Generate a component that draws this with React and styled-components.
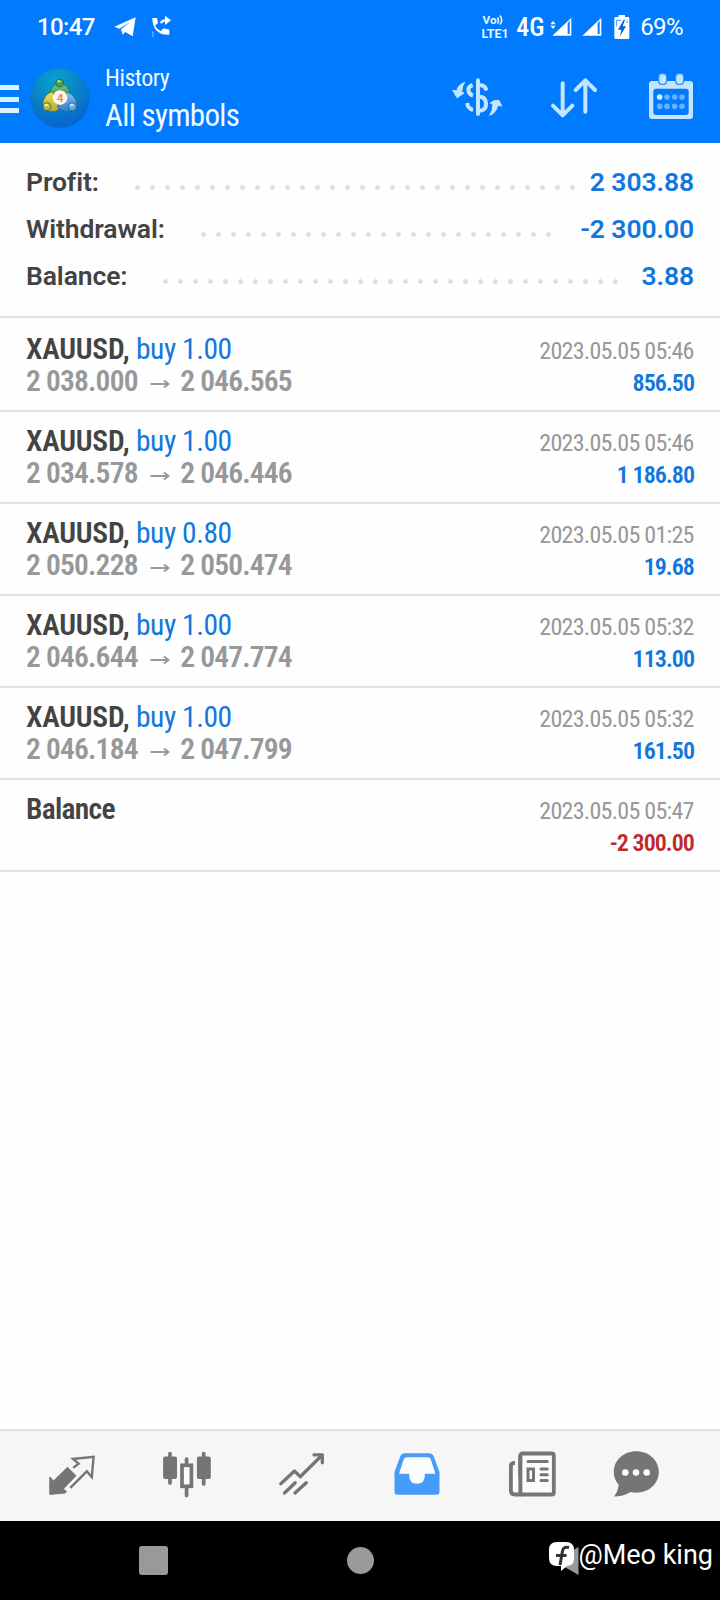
import React from "react";
import styled, { createGlobalStyle } from "styled-components";

const totals = [
  { label: "Profit:", value: "2 303.88", dots: 30 },
  { label: "Withdrawal:", value: "-2 300.00", dots: 24 },
  { label: "Balance:", value: "3.88", dots: 31 },
];

const deals = [
  { symbol: "XAUUSD,", side: "buy 1.00", open: "2 038.000", close: "2 046.565", time: "2023.05.05 05:46", profit: "856.50" },
  { symbol: "XAUUSD,", side: "buy 1.00", open: "2 034.578", close: "2 046.446", time: "2023.05.05 05:46", profit: "1 186.80" },
  { symbol: "XAUUSD,", side: "buy 0.80", open: "2 050.228", close: "2 050.474", time: "2023.05.05 01:25", profit: "19.68" },
  { symbol: "XAUUSD,", side: "buy 1.00", open: "2 046.644", close: "2 047.774", time: "2023.05.05 05:32", profit: "113.00" },
  { symbol: "XAUUSD,", side: "buy 1.00", open: "2 046.184", close: "2 047.799", time: "2023.05.05 05:32", profit: "161.50" },
  { symbol: "Balance", time: "2023.05.05 05:47", profit: "-2 300.00", loss: true },
];

const TelegramIcon = () => (
  <svg width="22" height="20" viewBox="344 52 66 60">
    <path fill="#fff" d="M345 81 L409 53 L400 110 L378 97 L370 105 L365 89 L394 66 L360 87 Z" />
  </svg>
);

const CallIcon = () => (
  <svg width="22" height="24" viewBox="450 45 66 72">
    <path fill="#fff" d="M457 54 h14 l3 15 -9 8 q7 12 17 16 l9 -8 17 4 v15 q-50 2 -51 -50 Z" />
    <path d="M483 70 q2 -9 14 -9" fill="none" stroke="#fff" strokeWidth="7" />
    <path fill="#fff" d="M495 47 L513 61 L495 75 Z" />
    <path d="M455 98 l4 -3 v17" fill="none" stroke="#9fd0ff" strokeWidth="2.5" />
  </svg>
);

const VolteIcon = () => (
  <svg width="28" height="24" viewBox="0 0 28 24" fill="#e8f5ff">
    <text x="1.5" y="9" fontSize="10.8" fontWeight="700" textLength="14" lengthAdjust="spacingAndGlyphs">Vo</text>
    <path d="M16.500 2.500 q2 3 0 6 M19 0.500 q3.500 4.500 0 9" fill="none" stroke="#e8f5ff" strokeWidth="1.600" />
    <text x="0.5" y="22.500" fontSize="12" fontWeight="700" textLength="27" lengthAdjust="spacingAndGlyphs">LTE1</text>
  </svg>
);

const SignalIcon = ({ data }) => (
  <svg width="22" height="20" viewBox="362 51 66 60">
    {data && <path fill="#fff" d="M363 73 l8 -10 8 10 Z M363 77 h16 l-8 10 Z" />}
    <path fill="#fff" fillRule="evenodd" d="M426 53 V107 H369 Z M415 70 V102 H421 V62 Z" />
  </svg>
);

const BatteryIcon = () => (
  <svg width="16" height="26" viewBox="551 39 48 78">
    <path fill="#fff" d="M565 42 h19 v6 h9 q4 0 4 4 v58 q0 4 -4 4 h-37 q-4 0 -4 -4 v-58 q0 -4 4 -4 h9 Z" />
    <path d="M559 76 V58 H572 M590 58 V66" fill="none" stroke="#3c96ff" strokeWidth="3" />
    <path fill="#0066e0" d="M580 56 L563 86 H573 L569 106 L587 76 H577 L584 56 Z" />
  </svg>
);

const AppLogo = () => (
  <svg width="60" height="60" viewBox="15 17 180 180">
    <defs>
      <radialGradient id="disc" cx="0.42" cy="0.22" r="0.8">
        <stop offset="0" stopColor="#08a4cf" />
        <stop offset="0.55" stopColor="#0880c8" />
        <stop offset="1" stopColor="#0762cf" />
      </radialGradient>
      <linearGradient id="green" x1="0" y1="0" x2="0" y2="1">
        <stop offset="0" stopColor="#7cc77c" />
        <stop offset="1" stopColor="#2e8b45" />
      </linearGradient>
      <linearGradient id="yellow" x1="0" y1="0" x2="0" y2="1">
        <stop offset="0" stopColor="#f0dd58" />
        <stop offset="1" stopColor="#b3ab2b" />
      </linearGradient>
      <linearGradient id="blue" x1="0" y1="0" x2="0" y2="1">
        <stop offset="0" stopColor="#7fc0f0" />
        <stop offset="1" stopColor="#2b7ec6" />
      </linearGradient>
    </defs>
    <circle cx="105" cy="107" r="89" fill="url(#disc)" />
    <g stroke="#1a5a70" strokeWidth="2">
      <path fill="url(#green)" d="M75 94 Q76 66 104 64 Q133 66 135 94 L120 110 H90 Z" />
      <path fill="url(#yellow)" d="M82 87 Q54 96 52 132 Q62 151 88 148 Q96 147 104 137 L92 112 Z" />
      <path fill="url(#blue)" d="M128 89 Q153 98 158 132 Q148 150 120 149 Q108 147 97 134 L112 112 Z" />
      <circle cx="104" cy="62" r="12" fill="#4a9f48" />
      <circle cx="66" cy="133" r="12" fill="#c3b63a" />
      <circle cx="142" cy="133" r="12" fill="#62ace3" />
    </g>
    <ellipse cx="102" cy="57" rx="6" ry="4" fill="#a3d79c" />
    <ellipse cx="64" cy="128" rx="6" ry="4" fill="#f2ea91" />
    <ellipse cx="140" cy="128" rx="6" ry="4" fill="#c7e6fc" />
    <circle cx="105" cy="106" r="22" fill="#fbf5ef" />
    <text x="105" y="118" fontSize="35" fontWeight="500" fill="#f07f3c" textAnchor="middle">4</text>
  </svg>
);

const CurrencyIcon = () => (
  <svg width="70" height="60" viewBox="0 0 210 180" fill="none" stroke="#c3e5ff" strokeLinecap="round">
    <path strokeWidth="12" d="M99 46 V147" />
    <path strokeWidth="12" d="M104 61 Q118 60 123 72 M104 95 Q123 96 123 117 Q123 137 104 137" />
    <path strokeWidth="12" strokeLinecap="butt" d="M83 60 Q69 65 70 76 Q72 88 84 92 M66 114 Q70 132 84 135" />
    <g fill="#c3e5ff" strokeWidth="3" strokeLinejoin="round">
      <path d="M24 76 L35 78 Q39 59 59 52 Q51 63 50 82 L57 84 L37 98 Z" />
      <path d="M169 123 L158 121 Q154 144 134 151 Q143 138 144 118 L136 115 Q143 105 161 106 Z" />
    </g>
  </svg>
);

const SortIcon = () => (
  <svg width="54" height="50" viewBox="351 219 162 150" fill="none" stroke="#c3e5ff" strokeWidth="12" strokeLinecap="round" strokeLinejoin="round">
    <path d="M398 250 V346 M369 317 L398 346 L427 317" />
    <path d="M466 335 V241 M437 270 L466 241 L495 270" />
  </svg>
);

const CalendarIcon = () => (
  <svg width="50" height="50" viewBox="651 219 150 150">
    <rect x="657" y="243" width="132" height="114" rx="9" fill="#c3e5ff" />
    <rect x="670" y="266" width="106" height="79" rx="8" fill="#007aff" />
    {[698, 749].map((x) => (
      <rect key={x} x={x - 12} y="221" width="24" height="32" rx="9" fill="#c3e5ff" stroke="#2b8fff" strokeWidth="4" />
    ))}
    {[291, 319].map((y) =>
      [689, 711, 734, 756].map((x) => (
        <circle key={`${x}-${y}`} cx={x} cy={y} r="8.500" fill={x === 689 && y === 291 ? "#d5f0ff" : "#66b2ff"} />
      ))
    )}
  </svg>
);

const QuotesIcon = () => (
  <TabSvg viewBox="0 0 48 48">
    <path fill="#757575" stroke="#757575" strokeWidth="1" strokeLinejoin="round" d="M1.800 25 L5.500 29 L19.500 15.300 L28 23.700 L15.300 37 L18.500 39.500 L17 41 L1.800 42.400 Z" />
    <path fill="none" stroke="#757575" strokeWidth="2.400" d="M25.200 15.900 L30.600 11.700 L25 7 L45.600 4.900 L43.800 25 L38.800 19.300 L22.300 35.900" />
  </TabSvg>
);

const ChartsIcon = () => (
  <TabSvg viewBox="0 0 48 48" stroke="#757575" strokeWidth="3.700" strokeLinecap="round" fill="#757575">
    <path d="M7 1.500 V31 M40.700 1.500 V32 M23.600 7 V12 M23.600 36 V43.500" />
    <rect x="1.200" y="5.700" width="11.700" height="20.300" rx="1" strokeWidth="2.200" />
    <rect x="35" y="5.700" width="11.700" height="20.300" rx="1" strokeWidth="2.200" />
    <rect x="19" y="13.300" width="9.400" height="21" fill="#fcfcfc" />
  </TabSvg>
);

const TradeIcon = () => (
  <TabSvg viewBox="0 0 48 48" fill="none" stroke="#757575" strokeWidth="3.300" strokeLinecap="round" strokeLinejoin="round">
    <path d="M2.800 31.700 L16.500 19 L22.200 24.700 L44 3.300" />
    <path d="M36 2.800 H44.300 V10.800" />
    <path d="M6.500 41 L17.200 30.700 M17 41 L28.300 30.700" />
  </TabSvg>
);

const HistoryIcon = () => (
  <TabSvg viewBox="0 0 48 48">
    <path fill="#469cfb" d="M12 1.300 H36 Q39.500 1.300 40.700 4.300 L46.500 20 V39.700 Q46.500 42.700 43.500 42.700 H4.500 Q1.500 42.700 1.500 39.700 V20 L7.300 4.300 Q8.500 1.300 12 1.300 Z" />
    <path fill="#fcfcfc" d="M13.500 5.200 H35 Q37 5.200 37.700 7 L42.400 21.800 H31.800 V23.500 Q31.800 31.700 24 31.700 Q16.200 31.700 16.200 23.500 V21.800 H6 L10.800 7 Q11.500 5.200 13.500 5.200 Z" />
  </TabSvg>
);

const NewsIcon = () => (
  <TabSvg viewBox="0 0 48 48" fill="none" stroke="#757575" strokeWidth="3.800" strokeLinecap="round">
    <rect x="12.300" y="1.500" width="33.500" height="41" rx="2" fill="#fcfcfc" />
    <path d="M7 11 Q2.900 11 2.900 14 V38.500 Q2.900 42.500 7 42.500 H14" fill="#fcfcfc" strokeLinecap="butt" />
    <path d="M12.300 4 V40" />
    <g strokeWidth="3">
      <path d="M20 9.500 H39.300 M33 17 H39.300 M33 22.800 H39.300 M33 28.500 H39.300" />
      <rect x="20" y="17" width="5.500" height="11.500" />
    </g>
  </TabSvg>
);

const ChatIcon = () => (
  <TabSvg viewBox="0 0 48 48">
    <path fill="#757575" d="M24.300 -0.700 C37 -0.700 46.800 8.500 46.800 20 C46.800 31.500 37 40.700 24.300 40.700 Q21.500 40.700 18.500 40 Q11 44.600 2 44.600 Q6.500 38.500 6.600 32.500 Q1.800 27.500 1.800 20 C1.800 8.500 11.600 -0.700 24.300 -0.700 Z" />
    {[13.3, 24, 34.7].map((x) => (
      <circle key={x} cx={x} cy="20.500" r="3.300" fill="#fcfcfc" />
    ))}
  </TabSvg>
);

export default function App() {
  return (
    <Screen>
      <GlobalStyle />
      <StatusBar>
        <Clock>10:47</Clock>
        <TelegramIcon />
        <CallIcon />
        <StatusRight>
          <VolteIcon />
          <Network>4G</Network>
          <SignalIcon data />
          <SignalIcon />
          <BatteryIcon />
          <Percent>69%</Percent>
        </StatusRight>
      </StatusBar>

      <AppBar>
        <MenuButton>
          <span />
          <span />
          <span />
        </MenuButton>
        <AppLogo />
        <Titles>
          <Subtitle>History</Subtitle>
          <Title>All symbols</Title>
        </Titles>
        <Actions>
          <CurrencyIcon />
          <SortIcon />
          <CalendarIcon />
        </Actions>
      </AppBar>

      <Summary>
        {totals.map((t) => (
          <SummaryRow key={t.label}>
            <SummaryLabel>{t.label}</SummaryLabel>
            <Leader $count={t.dots} />
            <SummaryValue>{t.value}</SummaryValue>
          </SummaryRow>
        ))}
      </Summary>

      <DealList>
        {deals.map((d, i) => (
          <Deal key={i}>
            <div>
              <DealTitle $tight={!d.side}>
                {d.symbol} {d.side && <Side>{d.side}</Side>}
              </DealTitle>
              {d.open && (
                <Prices>
                  {d.open}
                  <Arrow viewBox="0 0 20 10">
                    <path d="M0.500 5 H18 M14 1.500 L18.500 5 L14 8.500" />
                  </Arrow>
                  {d.close}
                </Prices>
              )}
            </div>
            <DealRight>
              <Time>{d.time}</Time>
              <Profit $loss={d.loss}>{d.profit}</Profit>
            </DealRight>
          </Deal>
        ))}
      </DealList>

      <TabBar>
        <Tab><QuotesIcon /></Tab>
        <Tab><ChartsIcon /></Tab>
        <Tab><TradeIcon /></Tab>
        <Tab><HistoryIcon /></Tab>
        <Tab><NewsIcon /></Tab>
        <Tab $width={92}><ChatIcon /></Tab>
      </TabBar>

      <SystemNav>
        <RecentKey />
        <HomeKey />
        <BackKey viewBox="0 0 26 30">
          <path d="M24.500 1 V29 L2 16 Q1 15 2 14 Z" />
        </BackKey>
        <Watermark>
          <svg width="25" height="30" viewBox="0 0 25 30">
            <path fill="#fff" d="M8 0 H17 Q25 0 25 8 V16 Q25 24 18 24 L12 29 V24 H8 Q0 24 0 16 V8 Q0 0 8 0 Z" />
            <path d="M20 5.500 Q14.500 4 13.500 9 L11 23 M7 13.500 H17.500" fill="none" stroke="#333" strokeWidth="3" />
          </svg>
          <span>@Meo king</span>
        </Watermark>
      </SystemNav>
    </Screen>
  );
}

const GlobalStyle = createGlobalStyle`
  * {
    box-sizing: border-box;
  }
  body {
    margin: 0;
    background: #fff;
    font-family: Roboto, "Liberation Sans", sans-serif;
  }
  svg {
    display: block;
    flex: none;
  }
`;

const condensed = `"Roboto Condensed", Roboto, sans-serif`;
const blue = "#1277dd";

const Screen = styled.div`
  display: flex;
  flex-direction: column;
  width: 720px;
  height: 1600px;
  overflow: hidden;
  background: #fefefe;
`;

const StatusBar = styled.div`
  display: flex;
  align-items: center;
  height: 54px;
  padding: 0 37px;
  background: #007aff;
  color: #fff;
  svg + svg {
    margin-left: 14px;
  }
`;

const Clock = styled.div`
  width: 77px;
  font-size: 24px;
  font-weight: 500;
  letter-spacing: -0.6px;
`;

const StatusRight = styled.div`
  display: flex;
  align-items: center;
  margin-left: auto;
  svg + svg {
    margin-left: 8px;
  }
  svg + svg + svg {
    margin-left: 12px;
  }
`;

const Network = styled.div`
  width: 41px;
  padding-left: 7px;
  font-family: ${condensed};
  font-size: 26px;
  font-weight: 500;
`;

const Percent = styled.div`
  margin-left: 10px;
  font-size: 24px;
  letter-spacing: -0.6px;
`;

const AppBar = styled.div`
  display: flex;
  align-items: center;
  height: 88.5px;
  padding-right: 23px;
  background: #007aff;
  color: #f0faff;
`;

const MenuButton = styled.div`
  display: flex;
  flex-direction: column;
  justify-content: space-between;
  width: 19px;
  height: 28px;
  margin: 2px 11px 0 0;
  span {
    height: 5px;
    background: #d9f3ff;
  }
`;

const Titles = styled.div`
  display: flex;
  flex-direction: column;
  gap: 3px;
  margin: 3px 0 0 15px;
  font-family: ${condensed};
`;

const Subtitle = styled.div`
  font-size: 24px;
  line-height: 30px;
  letter-spacing: -0.5px;
`;

const Title = styled.div`
  font-size: 31px;
  line-height: 40px;
  letter-spacing: -0.68px;
`;

const Actions = styled.div`
  display: flex;
  align-items: center;
  margin-left: auto;
  svg:nth-child(1) {
    margin: 0 32px 6px 0;
  }
  svg:nth-child(2) {
    margin-right: 46px;
  }
`;

const Summary = styled.div`
  height: 175.5px;
  padding: 15.5px 26px 0;
  border-bottom: 2px solid #e2e2e2;
`;

const SummaryRow = styled.div`
  display: flex;
  align-items: center;
  height: 47px;
  font-size: 26.5px;
  font-weight: 600;
  line-height: 47px;
  letter-spacing: -0.1px;
`;

const SummaryLabel = styled.div`
  color: #434343;
`;

const Leader = styled.div`
  width: ${(p) => p.$count * 15}px;
  height: 5px;
  margin: 12px 0 0 36px;
  background: radial-gradient(circle at 2.5px 2.5px, #dedede 2px, transparent 2.6px) 0 0 / 15px 5px;
`;

const SummaryValue = styled.div`
  margin-left: auto;
  color: ${blue};
`;

const DealList = styled.div`
  flex: 1;
  font-family: ${condensed};
`;

const Deal = styled.div`
  display: flex;
  justify-content: space-between;
  height: 92px;
  padding: 13px 26px 0;
  border-bottom: 2px solid #e2e2e2;
  &:first-child {
    height: 94px;
    padding-top: 15px;
  }
`;

const DealTitle = styled.div`
  font-size: 29.5px;
  font-weight: 600;
  line-height: 32px;
  letter-spacing: ${(p) => (p.$tight ? "-0.7px" : "-0.22px")};
  color: #434343;
`;

const Side = styled.span`
  font-weight: 400;
  letter-spacing: -0.45px;
  color: ${blue};
`;

const Prices = styled.div`
  display: flex;
  align-items: center;
  font-size: 29.5px;
  font-weight: 600;
  line-height: 32px;
  letter-spacing: -0.82px;
  color: #96989a;
`;

const Arrow = styled.svg`
  width: 20px;
  height: 10px;
  margin: 6px 10.5px 0 12px;
  fill: none;
  stroke: #96989a;
  stroke-width: 2;
`;

const DealRight = styled.div`
  padding-top: 2px;
  font-size: 24px;
  line-height: 32px;
  text-align: right;
`;

const Time = styled.div`
  margin-right: 0.3px;
  letter-spacing: -0.72px;
  color: #96989a;
`;

const Profit = styled.div`
  font-weight: 600;
  letter-spacing: -0.95px;
  color: ${(p) => (p.$loss ? "#bd2a2a" : blue)};
`;

const TabBar = styled.div`
  display: flex;
  align-items: center;
  height: 92px;
  padding-left: 14.5px;
  border-top: 2px solid #e0e0e0;
  background: #f6f6f6;
`;

const Tab = styled.div`
  display: flex;
  justify-content: center;
  width: ${(p) => p.$width || 115}px;
`;

const TabSvg = styled.svg`
  width: 48px;
  height: 48px;
  overflow: visible;
`;

const SystemNav = styled.div`
  position: relative;
  display: flex;
  align-items: center;
  height: 79px;
  padding-left: 139px;
  background: #000;
`;

const RecentKey = styled.div`
  width: 29px;
  height: 29px;
  border-radius: 3px;
  background: #999;
`;

const HomeKey = styled.div`
  width: 27px;
  height: 27px;
  margin-left: 178.5px;
  border-radius: 50%;
  background: #999;
`;

const BackKey = styled.svg`
  width: 26px;
  height: 30px;
  margin-left: 180px;
  fill: #999;
`;

const Watermark = styled.div`
  position: absolute;
  right: 7px;
  top: 14px;
  display: flex;
  align-items: center;
  gap: 4px;
  color: #fff;
  font-size: 27px;
  line-height: 40px;
  svg {
    margin-top: 4px;
  }
`;
